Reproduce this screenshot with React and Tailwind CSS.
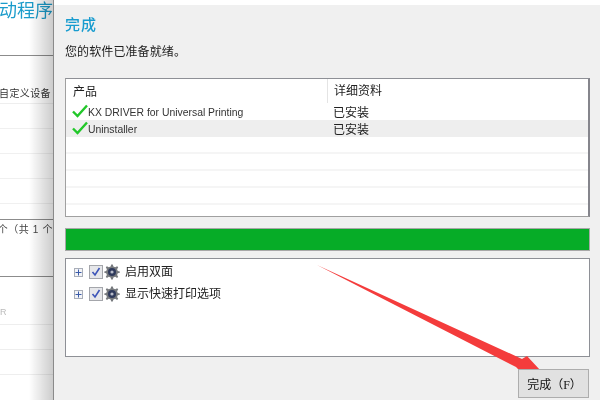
import React from "react";

const cjk = "font-['Liberation_Sans','Noto_Sans_CJK_SC',sans-serif]";

const Check = () => (
  <svg width="16" height="14" viewBox="0 0 16 14" className="shrink-0">
    <path d="M1 7.5 L5.5 12 L15 1.5" fill="none" stroke="#22c82a" strokeWidth="2.4" />
  </svg>
);

const Gear = () => (
  <svg width="16" height="16" viewBox="0 0 16 16" className="shrink-0">
    <path
      d="M7.2 0.5 L8.8 0.5 L9.4 2.6 L11.2 3.3 L13.1 2.2 L14.2 3.3 L13.1 5.2 L13.8 7 L15.8 7.4 L15.8 8.8 L13.8 9.2 L13.1 11 L14.2 12.8 L13.1 13.9 L11.2 12.8 L9.4 13.5 L8.8 15.5 L7.2 15.5 L6.6 13.5 L4.8 12.8 L2.9 13.9 L1.8 12.8 L2.9 11 L2.2 9.2 L0.3 8.8 L0.3 7.4 L2.2 7 L2.9 5.2 L1.8 3.3 L2.9 2.2 L4.8 3.3 L6.6 2.6 Z"
      fill="#777a7e"
    />
    <circle cx="8" cy="8" r="4" fill="#2f3a5c" />
    <circle cx="8" cy="8" r="1.6" fill="#b9bdca" />
  </svg>
);

const TreeRow = ({ label }) => (
  <div className="flex items-center h-[22px]">
    <div className="flex items-center justify-center w-[9px] h-[9px] ml-[8px] border border-[#a9aeb8] bg-[#f3f4f7]">
      <svg width="7" height="7" viewBox="0 0 7 7">
        <path d="M0.5 3.5 H6.5 M3.5 0.5 V6.5" stroke="#3a5ba8" strokeWidth="1" />
      </svg>
    </div>
    <div className="flex items-center justify-center w-[14px] h-[14px] ml-[6px] border border-[#a4a6ab] bg-[#e6e7ea]">
      <svg width="10" height="10" viewBox="0 0 10 10">
        <path d="M1.5 5 L4 8 L8.5 1" fill="none" stroke="#3d55b8" strokeWidth="1.6" />
      </svg>
    </div>
    <div className="ml-[1px]">
      <Gear />
    </div>
    <span className="ml-[5px] text-[12px] text-[#222]">{label}</span>
  </div>
);

const ProductRow = ({ name, selected }) => (
  <div className={`flex h-[17px] items-center ${selected ? "bg-[#eeeeee]" : ""}`}>
    <div className="flex items-center w-[261px] pl-[6px]">
      <Check />
      <span className="ml-[0px] text-[10.4px] text-[#333] relative top-[1px]">{name}</span>
    </div>
    <span className="pl-[6px] text-[12px] text-[#222] relative top-[1px]">已安装</span>
  </div>
);

const LeftWindow = () => (
  <div className="relative w-[53px] h-full shrink-0 overflow-hidden bg-white border-r border-[#8a8a8a] box-content">
    <div className="h-[56px] border-b border-[#8c8c8c]">
      <div className="flex justify-end pt-[1px] text-[18px] leading-[20px] text-[#1b9ccb] whitespace-nowrap">
        动程序
      </div>
    </div>
    <div className="h-[48px] border-b border-[#eeeeee] flex items-end justify-end pb-[2px] pr-[2px] text-[10px] tracking-[0.4px] text-[#333] whitespace-nowrap">
      自定义设备
    </div>
    <div className="h-[25px] border-b border-[#f0f0f0]" />
    <div className="h-[25px] border-b border-[#f0f0f0]" />
    <div className="h-[25px] border-b border-[#f0f0f0]" />
    <div className="h-[25px] border-b border-[#f0f0f0]" />
    <div className="h-[16px] border-b border-[#8c8c8c]" />
    <div className="h-[57px] border-b border-[#8c8c8c] flex justify-end pt-[2px] text-[10px] tracking-[0.6px] text-[#444] whitespace-nowrap">
      个（共 1 个
    </div>
    <div className="h-[48px] border-b border-[#eeeeee] flex items-end pb-[5px] text-[9px] text-[#bbb]">
      R
    </div>
    <div className="h-[25px] border-b border-[#eeeeee]" />
    <div className="h-[25px] border-b border-[#eeeeee]" />
    {/* window shadow falling on the page behind */}
    <div className="absolute inset-y-0 right-0 w-[24px] bg-gradient-to-r from-transparent to-black/20" />
  </div>
);

export default function App() {
  return (
    <div className={`relative flex w-[600px] h-[400px] overflow-hidden bg-white blur-[0.3px] ${cjk}`}>
      <LeftWindow />

      <div className="flex-1 flex flex-col mt-[5px] bg-[#f0f0f0] pl-[11px] pr-[10px]">
        <h1 className="mt-[10px] text-[15px] leading-[20px] font-medium tracking-[1px] text-[#189ccf]">完成</h1>
        <p className="mt-[8px] text-[12px] leading-[18px] tracking-[0.1px] text-[#222]">您的软件已准备就绪。</p>

        <div className="mt-[17px] h-[139px] border border-[#a0a0a0] border-t-[#8e9096] border-r-2 border-r-[#85858c] bg-white overflow-hidden">
          <div className="flex h-[24px] items-center">
            <div className="w-[261px] pl-[7px] text-[12px] text-[#222] relative top-[1px]">产品</div>
            <div className="h-full border-l border-[#e4e4e4] pl-[6px] flex items-center text-[12px] text-[#222]">详细资料</div>
          </div>
          <ProductRow name="KX DRIVER for Universal Printing" />
          <ProductRow name="Uninstaller" selected />
          <div className="h-[17px] border-b-2 border-[#f5f5f5]" />
          <div className="h-[17px] border-b-2 border-[#f5f5f5]" />
          <div className="h-[17px] border-b-2 border-[#f5f5f5]" />
          <div className="h-[17px] border-b-2 border-[#f5f5f5]" />
        </div>

        <div className="mt-[11px] h-[23px] border border-[#a8a8a8] bg-[#06ac27]" />

        <div className="mt-[7px] h-[99px] border border-[#8e9096] bg-white pt-[2px]">
          <TreeRow label="启用双面" />
          <TreeRow label="显示快速打印选项" />
        </div>

        <div className="flex justify-end mt-[12px] mr-[1px]">
          <button className="relative z-10 w-[71px] h-[29px] border border-[#adadad] bg-[#e1e1e1] pt-[2px] pl-[2px] text-[12px] text-[#111]">
            完成（<span className="font-['Liberation_Serif',serif]">F</span>）
          </button>
        </div>
      </div>

      {/* red arrow annotation */}
      <svg width="600" height="400" viewBox="0 0 600 400" className="absolute inset-0 pointer-events-none">
        <path d="M317 265 L522 359 L527 356 L540 370 L519 370 L516 367 Z" fill="#f43c3c" />
      </svg>
    </div>
  );
}
